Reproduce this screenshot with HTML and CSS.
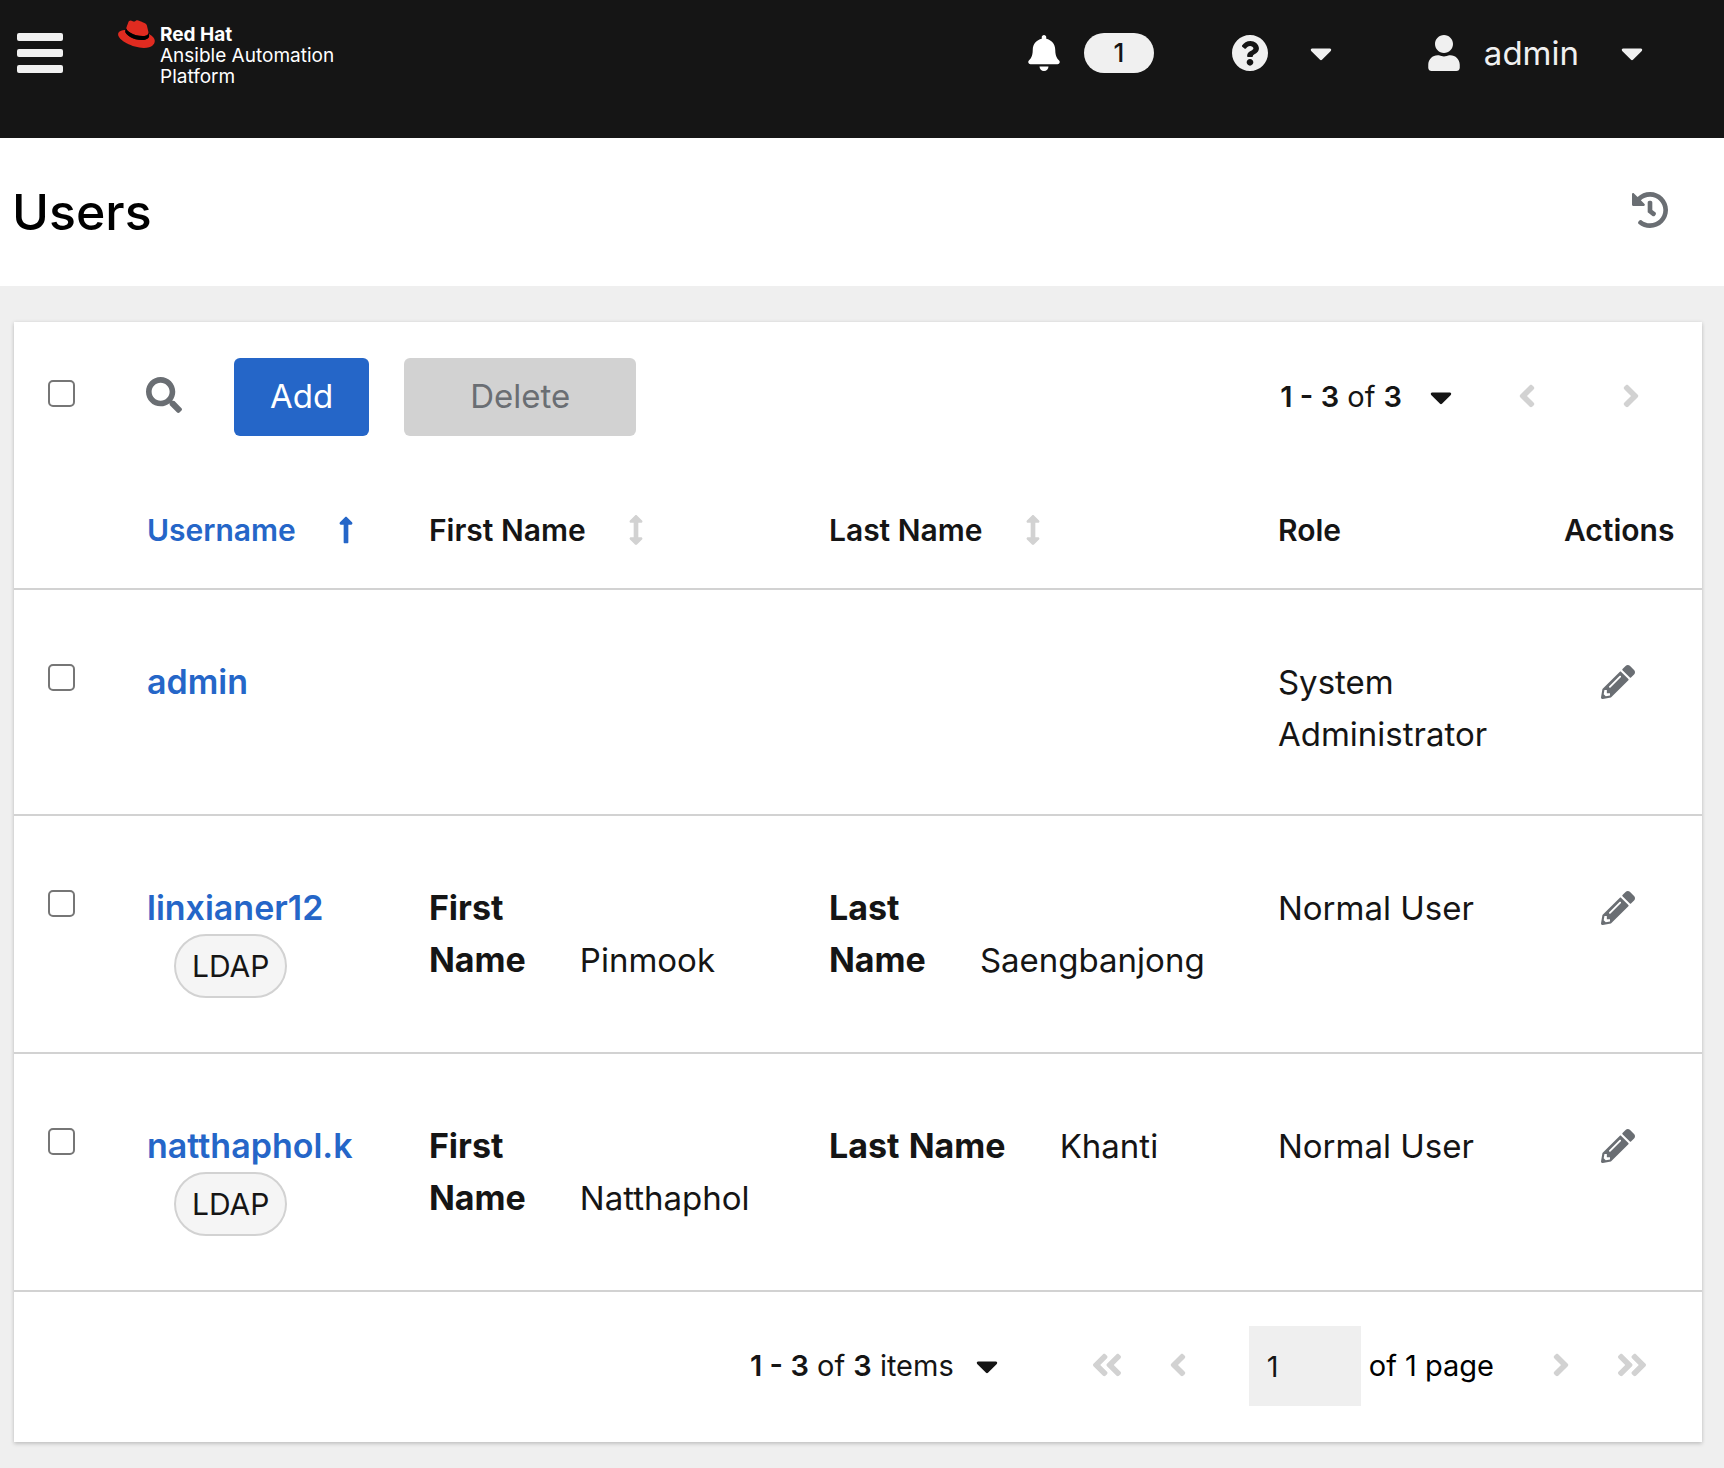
FILE: index.html
```html
<!DOCTYPE html>
<html lang="en">
<head>
<meta charset="utf-8">
<meta name="viewport" content="width=device-width, initial-scale=1">
<title>Users</title>
<link rel="stylesheet" href="styles.css">
</head>
<body>
<svg class="sprite" aria-hidden="true">
  <symbol id="bars" viewBox="0 0 46 40"><rect width="46" height="8" rx="2"/><rect y="16" width="46" height="8" rx="2"/><rect y="32" width="46" height="8" rx="2"/></symbol>
  <symbol id="bell" viewBox="0 0 448 512"><path d="M224 512c35.32 0 63.97-28.65 63.97-64H160.03c0 35.35 28.65 64 63.97 64zm215.39-149.71c-19.32-20.76-55.47-51.99-55.47-154.29 0-77.7-54.48-139.9-127.94-155.16V32c0-17.67-14.32-32-31.98-32s-31.98 14.33-31.98 32v20.84C118.56 68.1 64.08 130.3 64.08 208c0 102.3-36.15 133.53-55.47 154.29-6 6.45-8.66 14.16-8.61 21.71.11 16.4 12.98 32 32.1 32h383.8c19.12 0 32-15.6 32.1-32 .05-7.55-2.61-15.27-8.61-21.71z"/></symbol>
  <symbol id="question" viewBox="8 8 496 496"><path d="M504 256c0 136.997-111.043 248-248 248S8 392.997 8 256C8 119.083 119.043 8 256 8s248 111.083 248 248zM262.655 90c-54.497 0-89.255 22.957-116.549 63.758-3.536 5.286-2.353 12.415 2.715 16.258l34.699 26.31c5.205 3.947 12.621 3.008 16.665-2.122 17.864-22.658 30.113-35.797 57.303-35.797 20.429 0 45.698 13.148 45.698 32.958 0 14.976-12.363 22.667-32.534 33.976C247.128 238.528 216 254.941 216 296v4c0 6.627 5.373 12 12 12h56c6.627 0 12-5.373 12-12v-1.333c0-28.462 83.186-29.647 83.186-106.667 0-58.002-60.165-102-116.531-102zM256 338c-25.365 0-46 20.635-46 46 0 25.364 20.635 46 46 46s46-20.636 46-46c0-25.365-20.635-46-46-46z"/></symbol>
  <symbol id="user" viewBox="0 0 448 512"><path d="M224 256c70.7 0 128-57.3 128-128S294.7 0 224 0 96 57.3 96 128s57.3 128 128 128zm89.6 32h-16.7c-22.2 10.2-46.9 16-72.9 16s-50.6-5.8-72.9-16h-16.7C60.2 288 0 348.2 0 422.4V464c0 26.5 21.5 48 48 48h352c26.5 0 48-21.5 48-48v-41.6c0-74.2-60.2-134.4-134.4-134.4z"/></symbol>
  <symbol id="caret" viewBox="0 0 320 512"><path d="M31.3 192h257.3c17.8 0 26.7 21.5 14.1 34.1L174.1 354.7c-7.8 7.8-20.5 7.8-28.3 0L17.2 226.1C4.6 213.5 13.5 192 31.3 192z"/></symbol>
  <symbol id="history" viewBox="8 8 496 496"><path d="M504 255.531c.253 136.64-111.18 248.372-247.82 248.468-59.015.042-113.223-20.53-155.822-54.911-11.077-8.94-11.905-25.541-1.839-35.607l11.267-11.267c8.609-8.609 22.353-9.551 31.891-1.984C173.062 425.135 212.781 440 256 440c101.705 0 184-82.311 184-184 0-101.705-82.311-184-184-184-48.814 0-93.149 18.969-126.068 49.932l50.754 50.754c10.08 10.08 2.941 27.314-11.313 27.314H24c-8.837 0-16-7.163-16-16V38.627c0-14.254 17.234-21.393 27.314-11.314l49.372 49.372C129.209 34.136 189.552 8 256 8c136.81 0 247.747 110.78 248 247.531zm-180.912 78.784l9.823-12.63c8.138-10.463 6.253-25.542-4.21-33.679L288 256.349V152c0-13.255-10.745-24-24-24h-16c-13.255 0-24 10.745-24 24v135.651l65.409 50.874c10.463 8.137 25.541 6.253 33.679-4.21z"/></symbol>
  <symbol id="search" viewBox="0 0 512 512"><path d="M505 442.7L405.3 343c-4.5-4.5-10.6-7-17-7H372c27.6-35.3 44-79.7 44-128C416 93.1 322.9 0 208 0S0 93.1 0 208s93.1 208 208 208c48.3 0 92.7-16.4 128-44v16.3c0 6.4 2.5 12.5 7 17l99.7 99.7c9.4 9.4 24.6 9.4 33.9 0l28.3-28.3c9.4-9.4 9.4-24.6.1-34zM208 336c-70.7 0-128-57.2-128-128 0-70.7 57.2-128 128-128 70.7 0 128 57.2 128 128 0 70.7-57.2 128-128 128z"/></symbol>
  <symbol id="pencil" viewBox="0 0 512 512"><path d="M497.9 142.1l-46.1 46.1c-4.7 4.7-12.3 4.7-17 0l-111-111c-4.7-4.7-4.7-12.3 0-17l46.1-46.1c18.7-18.7 49.1-18.7 67.9 0l60.1 60.1c18.8 18.7 18.8 49.1 0 67.9zM284.2 99.8L21.6 362.4.4 483.9c-2.9 16.4 11.4 30.6 27.8 27.8l121.5-21.3 262.6-262.6c4.7-4.7 4.7-12.3 0-17l-111-111c-4.8-4.7-12.4-4.7-17.1 0zM124.1 339.9c-5.5-5.5-5.5-14.3 0-19.8l154-154c5.5-5.5 14.3-5.5 19.8 0s5.5 14.3 0 19.8l-154 154c-5.5 5.5-14.3 5.5-19.8 0zM88 424h48v36.3l-64.5 11.3-31.1-31.1L51.7 376H88v48z"/></symbol>
  <symbol id="angle-left" viewBox="0 0 256 512"><path d="M31.7 239l136-136c9.4-9.4 24.6-9.4 33.9 0l22.6 22.6c9.4 9.4 9.4 24.6 0 33.9L127.9 256l96.4 96.4c9.4 9.4 9.4 24.6 0 33.9L201.7 409c-9.4 9.4-24.6 9.4-33.9 0l-136-136c-9.5-9.4-9.5-24.6-.1-34z"/></symbol>
  <symbol id="angle-right" viewBox="0 0 256 512"><path d="M224.3 273l-136 136c-9.4 9.4-24.6 9.4-33.9 0l-22.6-22.6c-9.4-9.4-9.4-24.6 0-33.9l96.4-96.4-96.4-96.4c-9.4-9.4-9.4-24.6 0-33.9L54.3 103c9.4-9.4 24.6-9.4 33.9 0l136 136c9.5 9.4 9.5 24.6.1 34z"/></symbol>
  <symbol id="double-left" viewBox="0 0 448 512"><use href="#angle-left" width="256" height="512"/><use href="#angle-left" x="192" width="256" height="512"/></symbol>
  <symbol id="double-right" viewBox="0 0 448 512"><use href="#angle-right" width="256" height="512"/><use href="#angle-right" x="192" width="256" height="512"/></symbol>
  <symbol id="sort-up" viewBox="0 0 256 512"><path d="M88 166.059V468c0 6.627 5.373 12 12 12h56c6.627 0 12-5.373 12-12V166.059h46.059c21.382 0 32.09-25.851 16.971-40.971l-86.059-86.059c-9.373-9.373-24.569-9.373-33.941 0l-86.059 86.059c-15.119 15.119-4.411 40.971 16.971 40.971H88z"/></symbol>
  <symbol id="sort" viewBox="0 0 256 512"><path d="M214.059 377.941H168V134.059h46.059c21.382 0 32.09-25.851 16.971-40.971L144.971 7.029c-9.373-9.373-24.568-9.373-33.941 0L24.971 93.088c-15.119 15.119-4.411 40.971 16.971 40.971H88v243.882H41.941c-21.382 0-32.09 25.851-16.971 40.971l86.059 86.059c9.373 9.373 24.568 9.373 33.941 0l86.059-86.059c15.12-15.119 4.412-40.971-16.97-40.971z"/></symbol>
</svg>

<header class="masthead">
  <button class="plain nav-toggle" type="button" aria-label="Global navigation"><svg class="icon-bars"><use href="#bars"/></svg></button>
  <a class="brand" href="#">
    <svg class="hat" viewBox="0 0 192 145" aria-hidden="true">
      <path fill="#e02b20" d="M127.47,83.49c12.51,0,30.61-2.58,30.61-17.46a14,14,0,0,0-.31-3.42l-7.45-32.36c-1.72-7.12-3.23-10.35-15.73-16.6C124.89,8.69,103.76.5,97.51.5,91.69.5,90,8,83.06,8c-6.68,0-11.64-5.6-17.89-5.6-6,0-9.91,4.09-12.93,12.5,0,0-8.41,23.72-9.49,27.16A6.43,6.43,0,0,0,42.53,44c0,9.22,36.3,39.45,84.94,39.45M160,72.07c1.73,8.19,1.73,9.05,1.73,10.13,0,14-15.74,21.77-36.43,21.77C78.54,104,37.58,76.6,37.58,58.49a18.45,18.45,0,0,1,1.51-7.33C22.27,52,.5,55,.5,74.22c0,31.48,74.59,70.28,133.65,70.28,45.28,0,56.7-20.48,56.7-36.65,0-12.72-11-27.16-30.83-35.78"/>
      <path fill="#000" d="M160,72.07c1.73,8.19,1.73,9.05,1.73,10.13,0,14-15.74,21.77-36.43,21.77C78.54,104,37.58,76.6,37.58,58.49a18.45,18.45,0,0,1,1.51-7.33l3.66-9.06A6.43,6.43,0,0,0,42.53,44c0,9.22,36.3,39.45,84.94,39.45,12.51,0,30.61-2.58,30.61-17.46a14,14,0,0,0-.31-3.42Z"/>
    </svg>
    <span class="brand-name"><b>Red Hat</b><span>Ansible Automation</span><span>Platform</span></span>
  </a>
  <div class="tools">
    <button class="plain alerts" type="button" aria-label="Notifications"><svg class="icon-narrow"><use href="#bell"/></svg><span class="count">1</span></button>
    <button class="plain help" type="button" aria-label="Help"><svg class="icon"><use href="#question"/></svg><svg class="icon-caret"><use href="#caret"/></svg></button>
    <button class="plain account" type="button"><svg class="icon-narrow"><use href="#user"/></svg><span class="account-name">admin</span><svg class="icon-caret"><use href="#caret"/></svg></button>
  </div>
</header>

<main>
  <section class="title-bar">
    <h1>Users</h1>
    <button class="plain muted" type="button" aria-label="View activity stream"><svg class="icon"><use href="#history"/></svg></button>
  </section>

  <section class="card">
    <div class="toolbar">
      <input class="check" type="checkbox" aria-label="Select all">
      <button class="plain muted search" type="button" aria-label="Search"><svg class="icon"><use href="#search"/></svg></button>
      <button class="btn primary" type="button">Add</button>
      <button class="btn delete" type="button" disabled>Delete</button>
      <nav class="pager top" aria-label="Top pagination">
        <button class="plain range" type="button"><span><b>1 - 3</b> of <b>3</b></span><svg class="icon-caret"><use href="#caret"/></svg></button>
        <div class="steps">
          <button class="plain step" type="button" disabled aria-label="Previous page"><svg class="icon-angle"><use href="#angle-left"/></svg></button>
          <button class="plain step" type="button" disabled aria-label="Next page"><svg class="icon-angle"><use href="#angle-right"/></svg></button>
        </div>
      </nav>
    </div>

    <table class="users">
      <colgroup><col class="c-check"><col class="c-user"><col class="c-first"><col class="c-last"><col><col class="c-actions"></colgroup>
      <thead>
        <tr>
          <td></td>
          <th scope="col" aria-sort="ascending"><button class="plain sort active" type="button">Username<svg class="icon-sort"><use href="#sort-up"/></svg></button></th>
          <th scope="col"><button class="plain sort" type="button">First Name<svg class="icon-sort"><use href="#sort"/></svg></button></th>
          <th scope="col"><button class="plain sort" type="button">Last Name<svg class="icon-sort"><use href="#sort"/></svg></button></th>
          <th scope="col">Role</th>
          <th scope="col" class="actions">Actions</th>
        </tr>
      </thead>
      <tbody>
        <tr>
          <td class="select"><input class="check" type="checkbox" aria-label="Select admin"></td>
          <td><a class="name" href="#">admin</a></td>
          <td></td>
          <td></td>
          <td>System Administrator</td>
          <td class="actions"><button class="plain muted edit" type="button" aria-label="Edit admin"><svg class="icon-edit"><use href="#pencil"/></svg></button></td>
        </tr>
        <tr>
          <td class="select"><input class="check" type="checkbox" aria-label="Select linxianer12"></td>
          <td><a class="name" href="#">linxianer12</a><span class="pill">LDAP</span></td>
          <td><b>First</b> <span class="pair"><b>Name</b><span class="value">Pinmook</span></span></td>
          <td><b>Last</b> <span class="pair"><b>Name</b><span class="value">Saengbanjong</span></span></td>
          <td>Normal User</td>
          <td class="actions"><button class="plain muted edit" type="button" aria-label="Edit linxianer12"><svg class="icon-edit"><use href="#pencil"/></svg></button></td>
        </tr>
        <tr>
          <td class="select"><input class="check" type="checkbox" aria-label="Select natthaphol.k"></td>
          <td><a class="name" href="#">natthaphol.k</a><span class="pill">LDAP</span></td>
          <td><b>First</b> <span class="pair"><b>Name</b><span class="value">Natthaphol</span></span></td>
          <td><b>Last</b> <span class="pair"><b>Name</b><span class="value">Khanti</span></span></td>
          <td>Normal User</td>
          <td class="actions"><button class="plain muted edit" type="button" aria-label="Edit natthaphol.k"><svg class="icon-edit"><use href="#pencil"/></svg></button></td>
        </tr>
      </tbody>
    </table>

    <nav class="pager bottom" aria-label="Bottom pagination">
      <button class="plain range" type="button"><span><b>1 - 3</b> of <b>3</b> items</span><svg class="icon-caret"><use href="#caret"/></svg></button>
      <div class="steps">
        <button class="plain step" type="button" disabled aria-label="First page"><svg class="icon-double"><use href="#double-left"/></svg></button>
        <button class="plain step" type="button" disabled aria-label="Previous page"><svg class="icon-angle"><use href="#angle-left"/></svg></button>
      </div>
      <div class="page">
        <input class="page-input" id="page" type="text" value="1" disabled>
        <label for="page">of 1 page</label>
      </div>
      <div class="steps">
        <button class="plain step" type="button" disabled aria-label="Next page"><svg class="icon-angle"><use href="#angle-right"/></svg></button>
        <button class="plain step" type="button" disabled aria-label="Last page"><svg class="icon-double"><use href="#double-right"/></svg></button>
      </div>
    </nav>
  </section>
</main>
</body>
</html>
```
FILE: styles.css
```css
* { box-sizing: border-box; }

body {
  margin: 0;
  min-height: 100vh;
  background: #efefef;
  color: #151515;
  font: 400 33px/52px Inter, "Liberation Sans", sans-serif;
}

b { font-weight: 700; }
svg { display: block; flex: none; fill: currentColor; }
.sprite { position: absolute; width: 0; height: 0; }

.icon { width: 36px; height: 36px; }
.icon-edit { width: 34px; height: 34px; }
.icon-narrow { width: 32px; height: 36px; }
.icon-caret { width: 22px; height: 36px; }
.icon-angle { width: 18px; height: 36px; }
.icon-double { width: 32px; height: 36px; }
.icon-sort { width: 16px; height: 30px; }
.icon-bars { width: 46px; height: 40px; }

.plain {
  display: flex;
  align-items: center;
  padding: 0;
  border: 0;
  background: none;
  color: inherit;
  font: inherit;
  cursor: pointer;
}
.plain:disabled { cursor: default; }
.muted { color: #6a6e73; }

/* Masthead */
.masthead {
  display: flex;
  align-items: center;
  padding: 13px 81px 45px 17px;
  min-height: 138px;
  background: #151515;
  color: #f0f0f0;
}
.brand {
  display: flex;
  gap: 5px;
  margin-left: 55px;
  color: #fff;
  text-decoration: none;
}
.hat { width: 37px; height: 28px; }
.brand-name {
  display: flex;
  flex-direction: column;
  padding-top: 4px;
  font-size: 19px;
  line-height: 21px;
  white-space: nowrap;
}
.tools { display: flex; align-items: center; height: 80px; margin-left: auto; }
.alerts { gap: 24px; color: #fff; }
.count {
  width: 70px;
  border-radius: 20px;
  background: #f0f0f0;
  color: #151515;
  font-size: 26px;
  font-weight: 500;
  line-height: 40px;
  text-align: center;
}
.help { gap: 42px; margin-left: 78px; }
.account { margin-left: 96px; }
.account-name { margin: 0 42px 0 24px; }

/* Page title */
.title-bar {
  display: flex;
  align-items: flex-start;
  justify-content: space-between;
  padding: 40px 56px 40px 12px;
  background: #fff;
}
.title-bar .plain { margin-top: 14px; }
h1 {
  margin: 0;
  color: #000;
  font-size: 50px;
  font-weight: 500;
  line-height: 68px;
}

/* Card */
.card {
  margin: 36px 22px 26px 14px;
  background: #fff;
  box-shadow: 0 2px 4px rgba(3, 3, 3, 0.16), 0 0 4px rgba(3, 3, 3, 0.08);
}
.toolbar {
  display: flex;
  align-items: center;
  padding: 36px 62px 36px 34px;
}
.check {
  display: block;
  appearance: none;
  width: 27px;
  height: 27px;
  margin: 0;
  border: 2px solid #767676;
  border-radius: 5px;
  background: #fff;
}
.toolbar .check { margin-bottom: 8px; }
.search { margin: 0 52px 4px 71px; }
.btn {
  padding: 12px 36px 14px;
  border: 0;
  border-radius: 6px;
  font: inherit;
}
.primary { background: #2566c8; color: #fff; }
.delete { margin-left: 35px; padding: 12px 66px 14px; background: #d2d2d2; color: #6a6e73; }

/* Pagination */
.pager, .steps { display: flex; align-items: center; font-size: 29px; }
.pager b { font-weight: 600; }
.top { margin-left: auto; gap: 66px; }
.top .steps { gap: 86px; }
.bottom { justify-content: flex-end; padding: 34px 54px 36px; }
.bottom .steps { gap: 46px; }
.bottom .range { margin-right: 93px; }
.range { gap: 22px; white-space: nowrap; }
.top .range { gap: 28px; }
.step { color: #d2d2d2; }
.steps .icon-angle, .steps .icon-double { margin-bottom: 2px; }
.page { display: flex; align-items: center; gap: 8px; margin: 0 58px 0 62px; color: #000; }
.page-input {
  width: 112px;
  height: 80px;
  padding: 0 18px;
  border: 0;
  background: #efefef;
  color: #151515;
  font: inherit;
}

/* Users table */
.users { width: 100%; border-collapse: collapse; table-layout: fixed; }
.c-check { width: 133px; }
.c-user { width: 16.7%; }
.c-first { width: 23.7%; }
.c-last { width: 26.6%; }
.c-actions { width: 138px; }
.users tr { border-bottom: 2px solid #d2d2d2; }
.users th {
  height: 117px;
  padding: 0;
  font-size: 30px;
  font-weight: 600;
  text-align: left;
}
.sort { gap: 42px; }
.sort svg { color: #d2d2d2; }
.active, .active.sort svg { color: #2566c8; }
.users tbody td { padding: 66px 48px 54px 0; vertical-align: top; }
.users tbody .select { padding: 74px 0 0 34px; }
.users .actions, .users tbody .actions { padding-right: 31px; text-align: center; }
.edit { height: 52px; margin: 0 auto; }
.name, .users b { font-size: 34px; }
.name { display: block; color: #2566c8; font-weight: 600; text-decoration: none; }
.pill {
  display: block;
  width: max-content;
  margin-left: 27px;
  padding: 4px 16px;
  border: 2px solid #d2d2d2;
  border-radius: 32px;
  background: #f5f5f5;
  font-size: 30px;
}
.pair { white-space: nowrap; }
.value { margin-left: 54px; }
```
